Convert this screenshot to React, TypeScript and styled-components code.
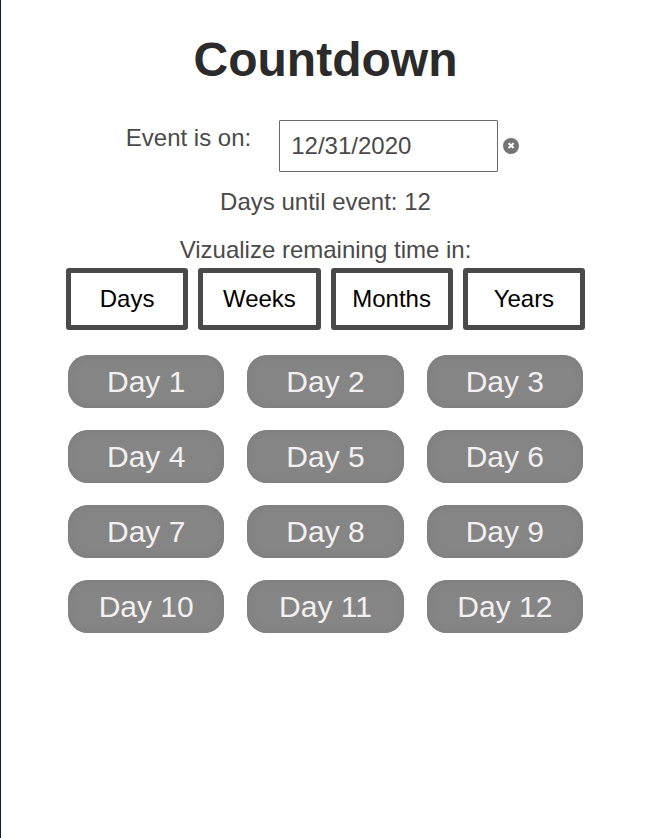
import React, { useState } from "react";
import styled, { createGlobalStyle } from "styled-components";

const GlobalStyle = createGlobalStyle`
  * { box-sizing: border-box; }
  body {
    margin: 0;
    background: #ffffff;
    color: #4a4a4a;
    font-family: "Liberation Sans", Arial, sans-serif;
  }
`;

const Page = styled.main`
  min-height: 100vh;
  padding: 30px 65px 24px;
  border-left: 1px solid #0b2233;
  display: flex;
  flex-direction: column;
  text-align: center;
`;

const Title = styled.h1`
  margin: 0;
  color: #2b2b2b;
  font-size: 48px;
  line-height: 60px;
`;

const DateRow = styled.form`
  display: flex;
  justify-content: center;
  align-items: flex-start;
  margin-top: 30px;
  padding-right: 6px;
`;

const DateLabel = styled.label`
  margin-right: 28px;
  font-size: 24px;
  line-height: 36px;
`;

const DateInput = styled.input`
  width: 219px;
  height: 52px;
  padding: 0 11px;
  border: 1px solid #6a6a6a;
  border-radius: 1px;
  background: #ffffff;
  color: #4a4a4a;
  font: 24px "Liberation Sans", Arial, sans-serif;
`;

const ClearButton = styled.button`
  display: flex;
  align-self: center;
  margin-left: 5px;
  padding: 0;
  border: 0;
  background: none;
`;

const Line = styled.p<{ $gap: number }>`
  margin: ${({ $gap }) => $gap}px 0 0;
  font-size: 24px;
  line-height: 28px;
`;

const UnitRow = styled.div`
  display: grid;
  grid-template-columns: repeat(4, 1fr);
  gap: 10px;
  margin-top: 4px;
`;

const UnitButton = styled.button`
  height: 62px;
  padding: 0;
  border: 5px solid #4a4a4a;
  border-radius: 3px;
  background: #ffffff;
  color: #000000;
  font: 24px "Liberation Sans", Arial, sans-serif;
`;

const DayGrid = styled.ul`
  display: grid;
  grid-template-columns: repeat(3, 1fr);
  gap: 22px 23px;
  margin: 25px 2px 0;
  padding: 0;
  list-style: none;
`;

const Day = styled.li`
  height: 53px;
  border-radius: 20px;
  background: #858585;
  box-shadow: inset 0 0 5px 2px #7f7f7f;
  color: #f2f1f0;
  font-size: 30px;
  line-height: 53px;
`;

const units = ["Days", "Weeks", "Months", "Years"];
const days = Array.from({ length: 12 }, (_, i) => i + 1);

export default function App() {
  const [date, setDate] = useState("12/31/2020");
  return (
    <>
      <GlobalStyle />
      <Page>
        <Title>Countdown</Title>
        <DateRow>
          <DateLabel htmlFor="event-date">Event is on:</DateLabel>
          <DateInput id="event-date" value={date} onChange={(e) => setDate(e.target.value)} />
          <ClearButton type="button" aria-label="Clear date" onClick={() => setDate("")}>
            <svg width="16" height="16" viewBox="0 0 16 16">
              <circle cx="8" cy="8" r="8" fill="#757575" />
              <path d="M5.6 5.2l5 4.8M10.6 5.2l-5 4.8" stroke="#fff" strokeWidth="2" />
            </svg>
          </ClearButton>
        </DateRow>
        <Line $gap={16}>Days until event: 12</Line>
        <Line $gap={20}>Vizualize remaining time in:</Line>
        <UnitRow>
          {units.map((unit) => (
            <UnitButton key={unit} type="button">{unit}</UnitButton>
          ))}
        </UnitRow>
        <DayGrid>
          {days.map((day) => (
            <Day key={day}>Day {day}</Day>
          ))}
        </DayGrid>
      </Page>
    </>
  );
}
